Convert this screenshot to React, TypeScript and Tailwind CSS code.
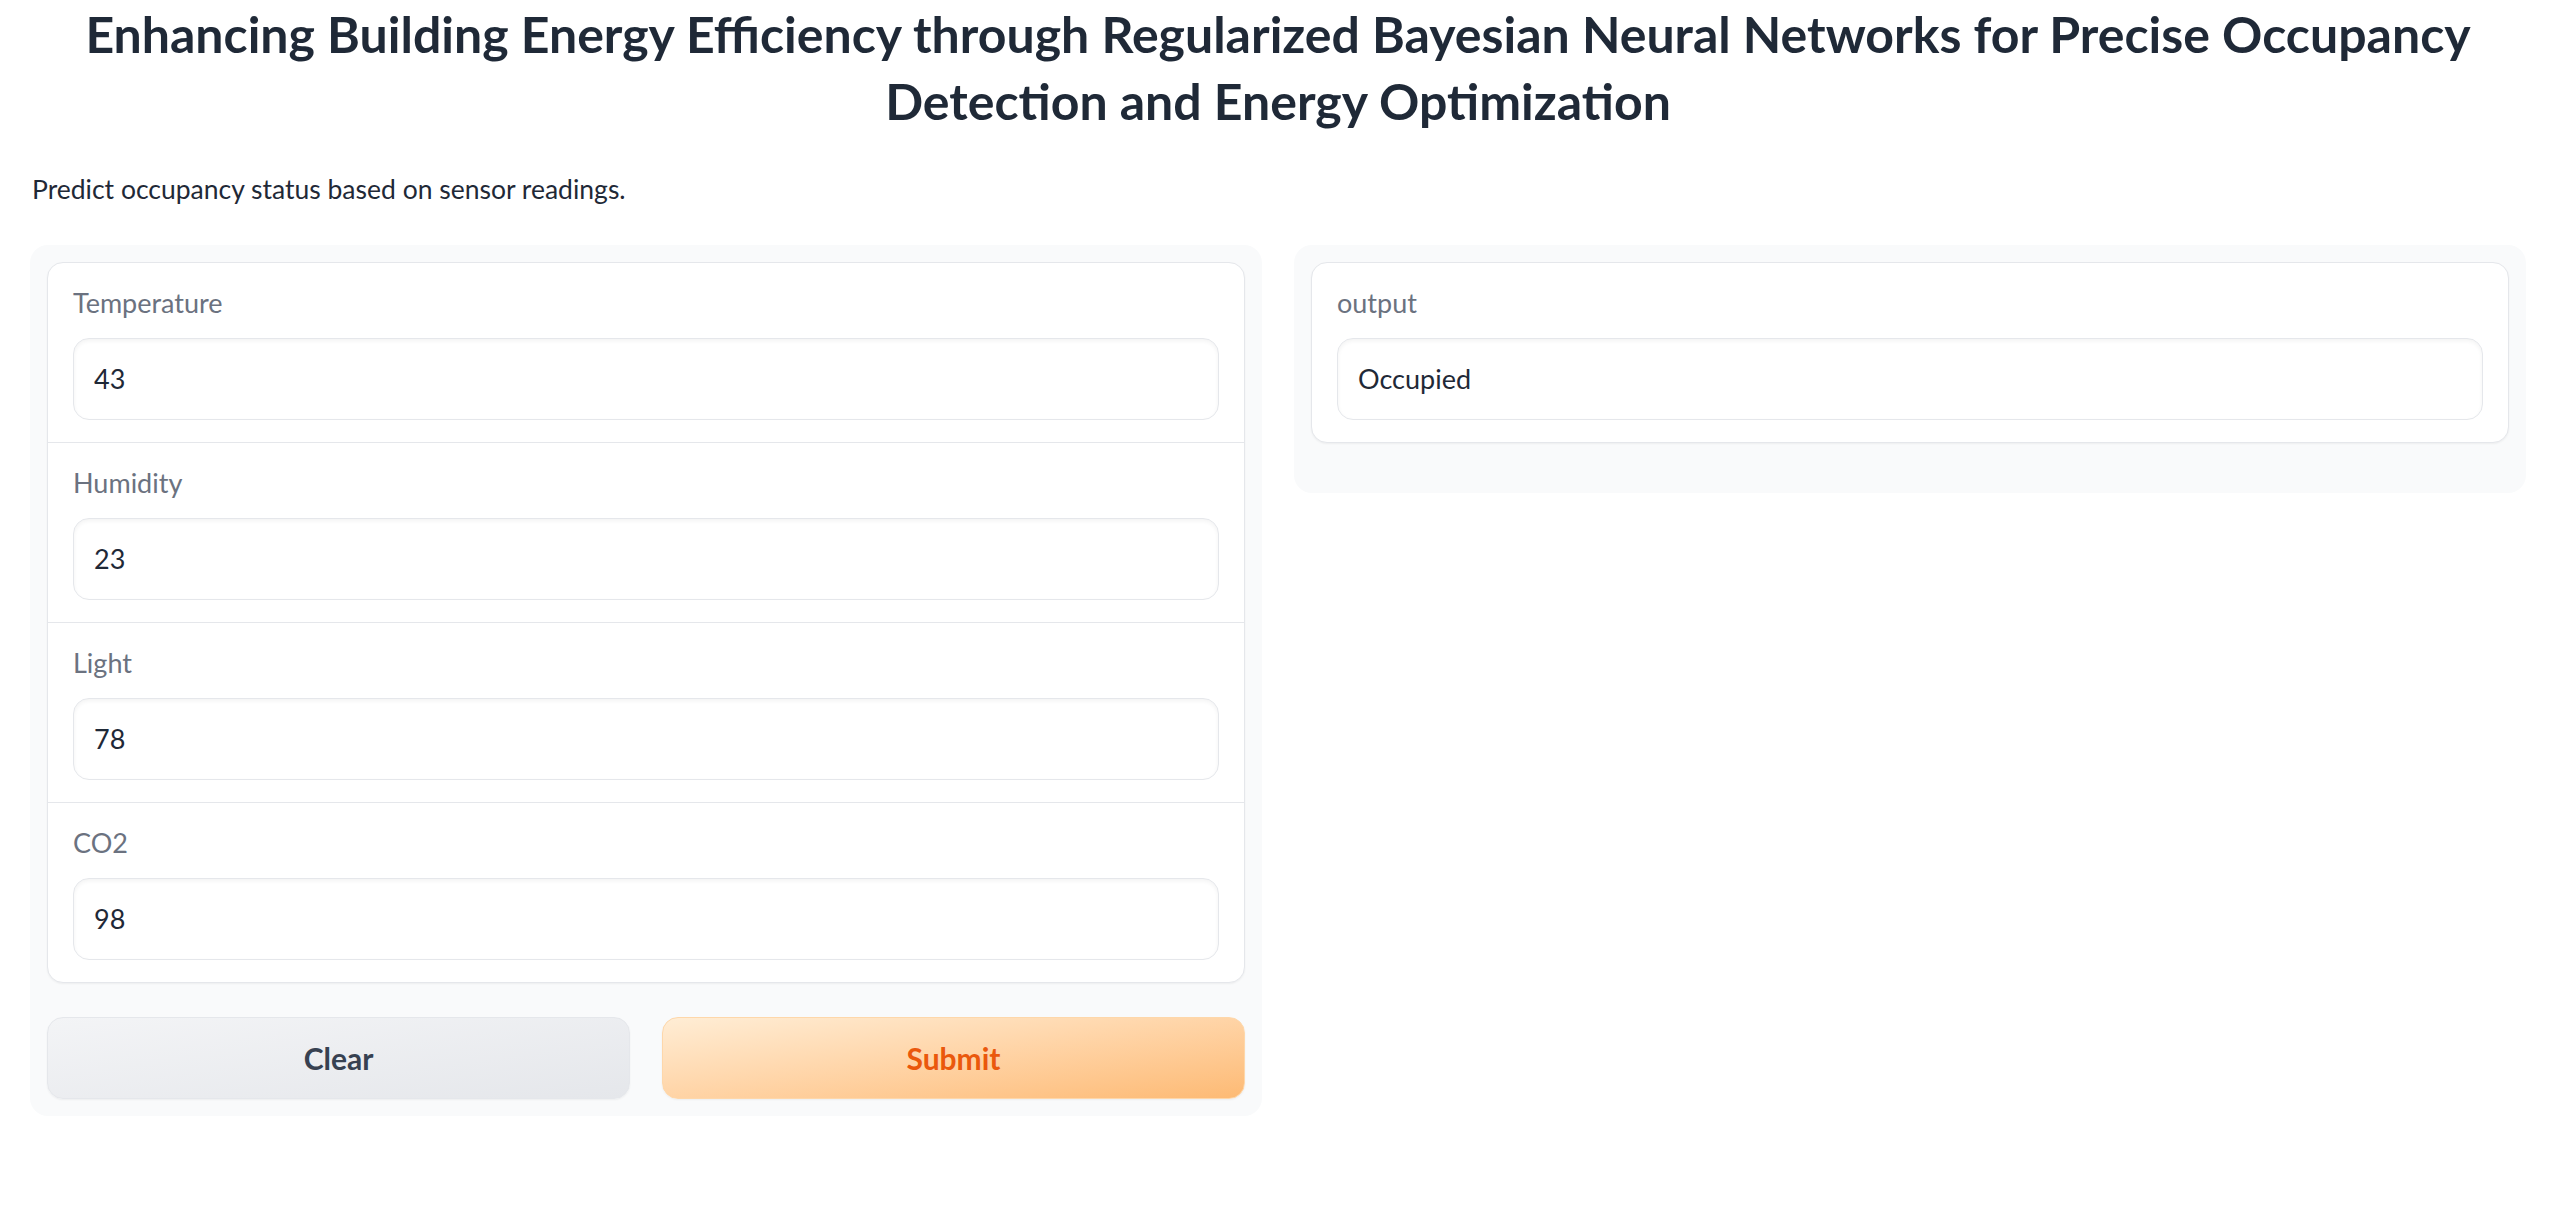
import React from "react";

const font = { fontFamily: "Lato, 'Noto Sans', sans-serif" };

function Field({ label, value, first }: { label: string; value: string; first?: boolean }) {
  return (
    <div className={`px-[25px] pt-[21px] pb-[22px] ${first ? "" : "border-t border-[#e5e7eb]"}`}>
      <div className="h-[38px] text-[27px] leading-[38px] text-[#6b7280]">{label}</div>
      <div className="mt-[16px] h-[82px] rounded-[16px] border border-[#e5e7eb] bg-white shadow-[inset_0_2px_4px_0_rgba(0,0,0,0.05)] px-[20px] flex items-center pt-[1px] text-[27px] text-[#1f2937]">
        {value}
      </div>
    </div>
  );
}

export default function App() {
  return (
    <div className="min-h-[1210px] w-full bg-white pl-[30px] pr-[24px]" style={font}>
      <h1 className="text-center text-[50px] leading-[67px] font-bold text-[#1f2937] whitespace-nowrap pt-[1px]">
        Enhancing Building Energy Efficiency through Regularized Bayesian Neural Networks for Precise Occupancy
        <br />
        Detection and Energy Optimization
      </h1>
      <p className="mt-[34px] text-[26.5px] leading-[40px] text-[#1f2937] pl-[2px]">
        Predict occupancy status based on sensor readings.
      </p>
      <div className="mt-[36px] flex items-start gap-[32px]">
        <div className="flex-1 rounded-[18px] bg-[#f9fafb] p-[17px]">
          <div className="rounded-[16px] border border-[#e5e7eb] bg-white shadow-[0_1px_2px_0_rgba(0,0,0,0.05)]">
            <Field label="Temperature" value="43" first />
            <Field label="Humidity" value="23" />
            <Field label="Light" value="78" />
            <Field label="CO2" value="98" />
          </div>
          <div className="mt-[34px] flex gap-[32px]">
            <button className="flex-1 h-[82px] rounded-[16px] border border-[#e5e7eb] bg-gradient-to-br from-[#f3f4f6] to-[#e5e7eb] text-[30px] font-bold text-[#374151] shadow-[0_1px_2px_0_rgba(0,0,0,0.05)]">
              Clear
            </button>
            <button className="flex-1 h-[82px] rounded-[16px] border border-[#fed7aa] bg-gradient-to-br from-[#ffedd5] to-[#fdba74] text-[30px] font-bold text-[#ea580c] shadow-[0_1px_2px_0_rgba(0,0,0,0.05)]">
              Submit
            </button>
          </div>
        </div>
        <div className="flex-1 rounded-[18px] bg-[#f9fafb] pt-[17px] px-[17px] pb-[50px]">
          <div className="rounded-[16px] border border-[#e5e7eb] bg-white shadow-[0_1px_2px_0_rgba(0,0,0,0.05)]">
            <Field label="output" value="Occupied" first />
          </div>
        </div>
      </div>
    </div>
  );
}
